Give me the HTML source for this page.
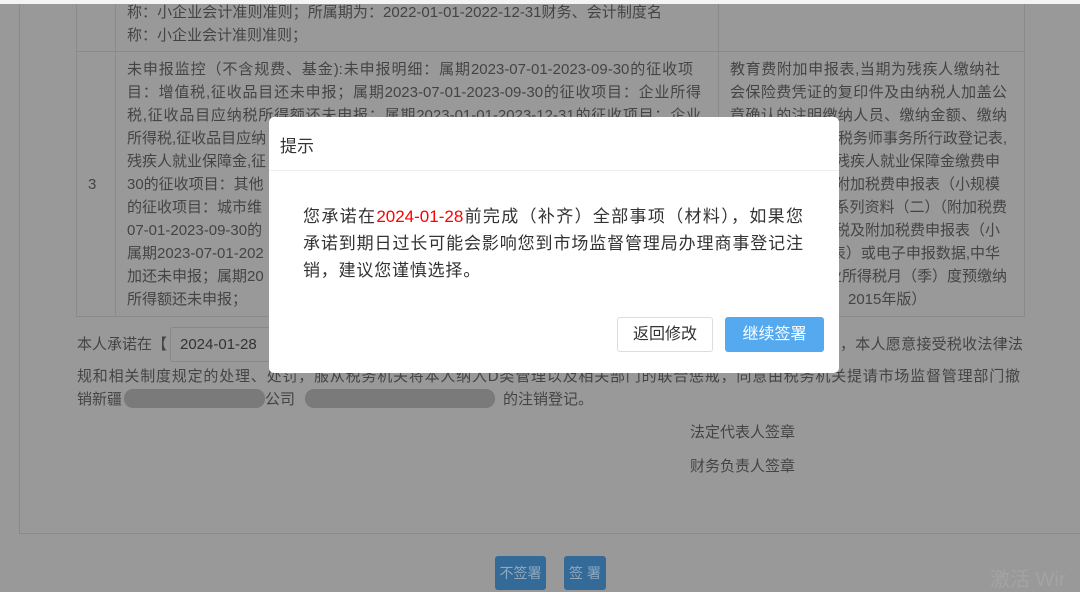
<!DOCTYPE html>
<html><head><meta charset="utf-8"><style>
*{margin:0;padding:0;box-sizing:border-box}
body{width:1080px;height:592px;overflow:hidden;background:#999;font-family:"Liberation Sans","Noto Sans CJK SC",sans-serif;color:#444;position:relative}
.a{position:absolute}
.t{font-size:15px;line-height:23px;white-space:nowrap}
.j{text-align:justify;text-align-last:justify;white-space:nowrap;font-size:15px;line-height:23px;height:23px;overflow:visible}
.r{text-align:right;white-space:nowrap;font-size:15px;line-height:23px;height:23px}
.vl{position:absolute;width:1px;background:#8a8a8a}
.hl{position:absolute;height:1px;background:#8a8a8a}
</style></head><body>
<div class="a" style="left:0;top:0;width:1080px;height:4px;background:#f4f4f4"></div>
<div class="vl" style="left:19px;top:4px;height:529px"></div>
<div class="hl" style="left:19px;top:533px;width:1061px"></div>
<div class="vl" style="left:76px;top:4px;height:312px"></div>
<div class="vl" style="left:115px;top:4px;height:312px"></div>
<div class="vl" style="left:718px;top:4px;height:312px"></div>
<div class="vl" style="left:1024px;top:4px;height:312px"></div>
<div class="hl" style="left:76px;top:51px;width:949px"></div>
<div class="hl" style="left:76px;top:316px;width:949px"></div>
<div class="a" style="left:127px;top:1px;width:535px"><div class="j">称：小企业会计准则准则；所属期为：2022-01-01-2022-12-31财务、会计制度名</div></div>
<div class="a t" style="left:127px;top:24px">称：小企业会计准则准则；</div>
<div class="a t" style="left:88px;top:173px">3</div>
<div class="a" style="left:127px;top:58px;width:566px">
<div class="j">未申报监控（不含规费、基金):未申报明细：属期2023-07-01-2023-09-30的征收项</div>
<div class="j" style="width:574px">目：增值税,征收品目还未申报；属期2023-07-01-2023-09-30的征收项目：企业所得</div>
<div class="j" style="width:574px">税,征收品目应纳税所得额还未申报；属期2023-01-01-2023-12-31的征收项目：企业</div>
<div class="t">所得税,征收品目应纳</div>
<div class="t">残疾人就业保障金,征</div>
<div class="t">30的征收项目：其他</div>
<div class="t">的征收项目：城市维</div>
<div class="t">07-01-2023-09-30的</div>
<div class="t">属期2023-07-01-202</div>
<div class="t">加还未申报；属期20</div>
<div class="t">所得额还未申报；</div>
</div>
<div class="a" style="left:730px;top:58px;width:277px">
<div class="j" style="width:270px">教育费附加申报表,当期为残疾人缴纳社</div>
<div class="j">会保险费凭证的复印件及由纳税人加盖公</div>
<div class="j">章确认的注明缴纳人员、缴纳金额、缴纳</div>
<div class="r">税务师事务所行政登记表,</div>
<div class="r" style="width:270px">残疾人就业保障金缴费申</div>
<div class="r" style="width:270px">附加税费申报表（小规模</div>
<div class="r">系列资料（二）（附加税费</div>
<div class="r" style="width:270px">税及附加税费申报表（小</div>
<div class="r" style="width:270px">表）或电子申报数据,中华</div>
<div class="r">业所得税月（季）度预缴纳</div>
</div>
<div class="a t" style="left:848px;top:288px">2015年版）</div>
<div class="a t" style="left:77px;top:333px">本人承诺在【</div>
<div class="a" style="left:170px;top:327px;width:120px;height:35px;border:1px solid #888;border-radius:3px;font-size:15px;line-height:33px;padding-left:9px;color:#333">2024-01-28</div>
<div class="a" style="left:840px;top:333px;width:183px"><div class="j">，本人愿意接受税收法律法</div></div>
<div class="a" style="left:77px;top:365px;width:943px"><div class="j">规和相关制度规定的处理、处罚，服从税务机关将本人纳入D类管理以及相关部门的联合惩戒，同意由税务机关提请市场监督管理部门撤</div></div>
<div class="a t" style="left:77px;top:388px">销新疆</div>
<div class="a t" style="left:265px;top:388px">公司（</div>
<div class="a t" style="left:503px;top:388px">的注销登记。</div>
<div class="a" style="left:124px;top:389px;width:141px;height:19px;border-radius:9px;background:#7a7a7a"></div>
<div class="a" style="left:305px;top:389px;width:190px;height:19px;border-radius:9px;background:#7a7a7a"></div>
<div class="a t" style="left:690px;top:421px">法定代表人签章</div>
<div class="a t" style="left:690px;top:455px">财务负责人签章</div>
<div class="a" style="left:495px;top:556px;width:51px;height:34px;background:#336a97;border-radius:3px;color:#8fa9c0;font-size:14px;line-height:34px;text-align:center">不签署</div>
<div class="a" style="left:564px;top:556px;width:42px;height:34px;background:#336a97;border-radius:3px;color:#8fa9c0;font-size:14px;line-height:34px;text-align:center">签 署</div>
<div class="a" style="left:990px;top:563px;font-size:20px;color:#a3a3a3;white-space:nowrap">激活 Wir</div>

<div class="a" style="left:269px;top:117px;width:570px;height:256px;background:#fff;border-radius:5px">
 <div class="a" style="left:11px;top:15px;font-size:17px;color:#333">提示</div>
 <div class="a" style="left:0;top:53px;width:570px;height:1px;background:#eee"></div>
 <div class="a" style="left:34px;top:86px;width:500px;font-size:17px;line-height:27px;color:#333">
  <div style="text-align:justify;text-align-last:justify;white-space:nowrap;height:27px">您承诺在<span style="color:#f00">2024-01-28</span>前完成（补齐）全部事项（材料），如果您</div>
  <div style="text-align:justify;text-align-last:justify;white-space:nowrap;height:27px">承诺到期日过长可能会影响您到市场监督管理局办理商事登记注</div>
  <div style="white-space:nowrap;letter-spacing:0.8px">销，建议您谨慎选择。</div>
 </div>
 <div class="a" style="left:348px;top:200px;width:96px;height:35px;border:1px solid #ddd;border-radius:3px;font-size:16px;line-height:33px;text-align:center;color:#333">返回修改</div>
 <div class="a" style="left:456px;top:200px;width:99px;height:35px;background:#55aaef;border-radius:3px;font-size:16px;line-height:35px;text-align:center;color:#fff">继续签署</div>
</div>
</body></html>
